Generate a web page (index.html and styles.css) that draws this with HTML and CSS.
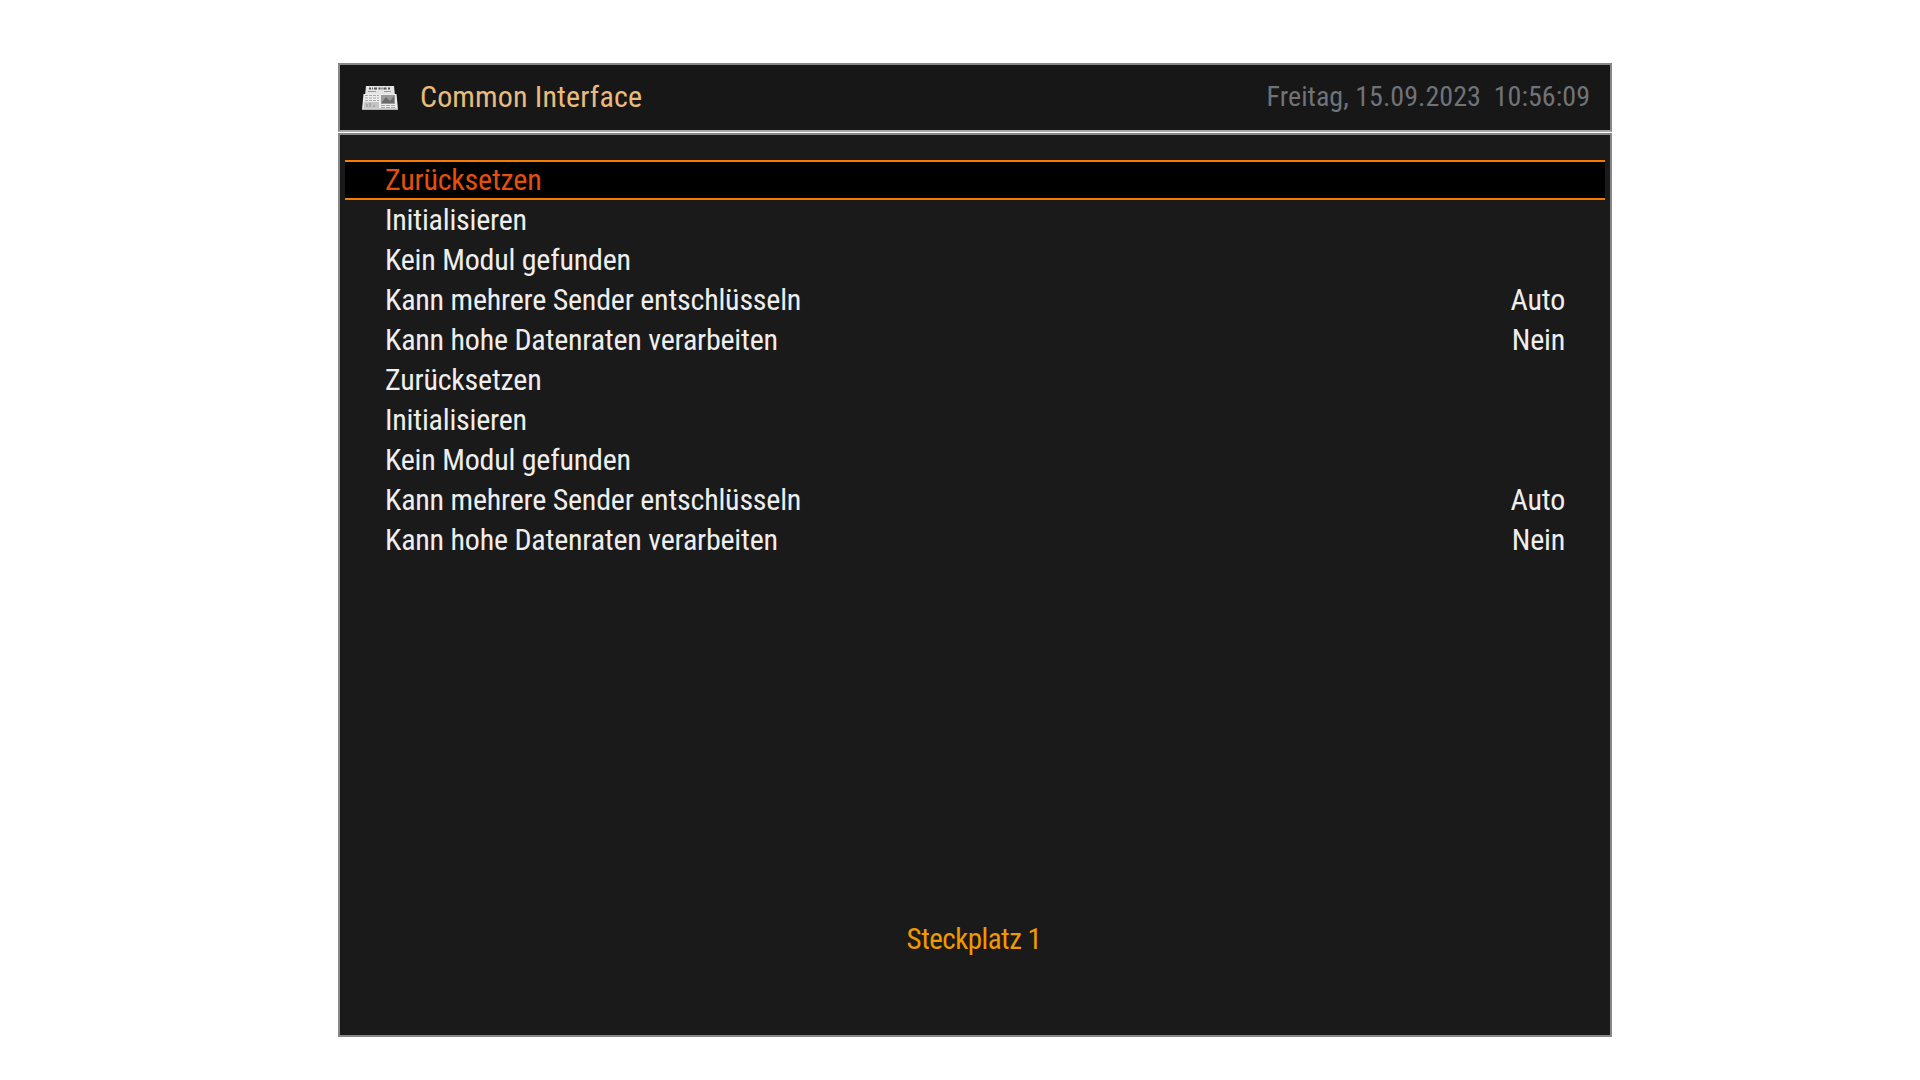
FILE: index.html
```html
<!DOCTYPE html>
<html lang="de">
<head>
  <meta charset="UTF-8" />
  <title>Common Interface</title>
  <link rel="stylesheet" href="styles.css">
</head>
<body>
  <div class="screen">
    <!-- Header -->
    <header class="header">
      <div class="header-left">
        <svg class="news-icon" width="36" height="24" viewBox="0 0 36 24">
          <path d="M4 0H32L33 10H3Z" fill="#e4e4e4"/>
          <path d="M7 2.5H29" stroke="#555" stroke-width="2" stroke-dasharray="2 1 1 1 3 1.5"/>
          <path d="M6 5.5H14M22 5.5H29" stroke="#999"/>
          <path d="M1.5 8H34.5L36 24H0Z" fill="#ececec"/>
          <path d="M3 9.5H17M3 12H17M3 14.5H17" stroke="#a8a8a8" stroke-dasharray="3 1"/>
          <rect x="19" y="9" width="14" height="9" fill="#9a9a9a"/>
          <path d="M20 16L24 11L28 15L32 10V17H20Z" fill="#6a6a6a"/>
          <rect x="2" y="16" width="15" height="6" fill="#c4c4c4"/>
          <path d="M5 21V18M8 21V17M12 21V19" stroke="#8e8e8e"/>
          <path d="M19 19.5H34M19 21.5H34" stroke="#a6a6a6" stroke-dasharray="4 1"/>
          <rect x="0" y="22.5" width="36" height="1.5" fill="#b4b4b4"/>
        </svg>
        <span class="title">Common Interface</span>
      </div>
      <span class="clock">Freitag, 15.09.2023&nbsp; 10:56:09</span>
    </header>

    <!-- Menu -->
    <main class="body">
      <ul class="menu">
        <li class="row selected"><span>Zurücksetzen</span></li>
        <li class="row"><span>Initialisieren</span></li>
        <li class="row"><span>Kein Modul gefunden</span></li>
        <li class="row"><span>Kann mehrere Sender entschlüsseln</span><span>Auto</span></li>
        <li class="row"><span>Kann hohe Datenraten verarbeiten</span><span>Nein</span></li>
        <li class="row"><span>Zurücksetzen</span></li>
        <li class="row"><span>Initialisieren</span></li>
        <li class="row"><span>Kein Modul gefunden</span></li>
        <li class="row"><span>Kann mehrere Sender entschlüsseln</span><span>Auto</span></li>
        <li class="row"><span>Kann hohe Datenraten verarbeiten</span><span>Nein</span></li>
      </ul>
      <div class="slot">Steckplatz 1</div>
    </main>
  </div>
</body>
</html>
```

FILE: styles.css
```css
* {
  box-sizing: border-box;
  margin: 0;
  padding: 0;
}

body {
  background: #fff;
  font-family: 'Roboto', sans-serif;
  font-stretch: 75%;
  padding: 63px 0 0 338px;
}

.screen {
  width: 1274px;
}

.header {
  height: 69px;
  background: #171717;
  border: 2px solid #888;
  border-bottom-color: #aaa;
  display: flex;
  justify-content: space-between;
  align-items: center;
  padding: 0 20px 3px 22px;
}

.header-left {
  display: flex;
  align-items: center;
  gap: 22px;
}

.news-icon {
  margin-top: 3px;
}

.title {
  font-size: 30px;
  letter-spacing: 0.15px;
  color: #e8bc7d;
}

.clock {
  font-size: 28px;
  letter-spacing: 0.03px;
  color: #6f7378;
}

.body {
  height: 904px;
  margin-top: 1px;
  background: #1a1a1a;
  border: 2px solid #888;
  padding: 25px 5px 0;
}

.menu {
  list-style: none;
}

.row {
  height: 40px;
  display: flex;
  justify-content: space-between;
  align-items: center;
  padding: 0 40px 2px;
  font-size: 30px;
  letter-spacing: -0.22px;
  color: #eee;
}

.selected {
  background: #000;
  border-top: 2px solid #f97a00;
  border-bottom: 2px solid #f97a00;
  color: #e2500b;
}

.slot {
  margin-top: 362px;
  text-align: center;
  padding-right: 2px;
  font-size: 29px;
  letter-spacing: -0.5px;
  color: #f09a00;
}
```
